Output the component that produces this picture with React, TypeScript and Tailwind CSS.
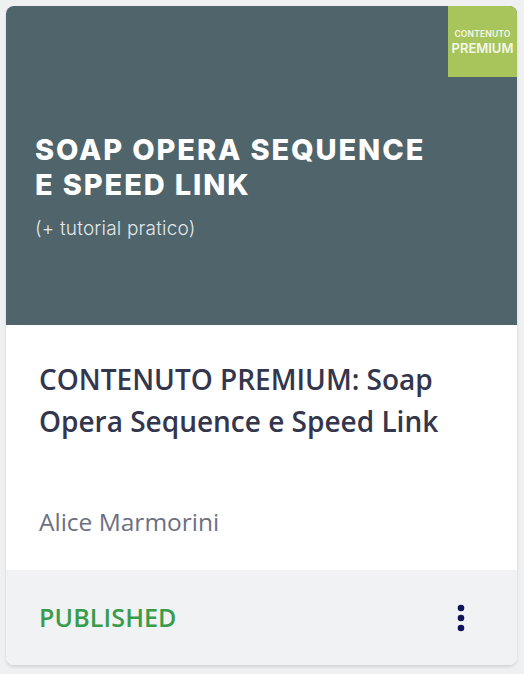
export default function App() {
  return (
    <div className="min-h-screen bg-[#eff0f2] p-[6px]">
      <div className="w-[511px] overflow-hidden rounded-lg bg-white shadow-[0_2px_3px_rgba(0,0,0,0.12)]">
        {/* Cover */}
        <div className="relative h-[319px] bg-[#4f646b] px-[29px] pt-[126px] font-['Inter',sans-serif] text-white">
          <div className="absolute right-0 top-0 flex h-[71px] w-[69px] flex-col items-center justify-center bg-[#a8c55b] pt-[2px] leading-none text-[#f4f8ea]">
            <span className="text-[8.5px] font-semibold tracking-[0.02em]">CONTENUTO</span>
            <span className="mt-[3px] text-[13px] font-semibold">PREMIUM</span>
          </div>
          <h1 className="text-[29px] font-extrabold leading-[35px] tracking-[0.065em]">
            SOAP OPERA SEQUENCE
            <br />
            E SPEED LINK
          </h1>
          <p className="mt-[13px] text-[19px] font-light tracking-[0.01em] text-[#e3e8ea]">(+ tutorial pratico)</p>
        </div>

        {/* Body */}
        <div className="flex h-[245px] flex-col px-[33px] pt-[33px] font-['Open_Sans',sans-serif]">
          <h2 className="text-[28px] font-semibold leading-[42px] text-[#33364c]">
            CONTENUTO PREMIUM: Soap Opera Sequence e Speed Link
          </h2>
          <div className="mt-auto pb-[29px] text-[24.5px] text-[#6c7082]">Alice Marmorini</div>
        </div>

        {/* Footer */}
        <div className="flex h-[95px] items-center justify-between bg-[#f1f2f4] pl-[33px] pr-[52px] font-['Open_Sans',sans-serif]">
          <span className="text-[25px] font-semibold tracking-[0.005em] text-[#399c4b]">PUBLISHED</span>
          <svg width="8" height="28" viewBox="0 0 8 28" className="text-[#15135c]">
            <circle cx="4" cy="4" r="3.3" fill="currentColor" />
            <circle cx="4" cy="14" r="3.3" fill="currentColor" />
            <circle cx="4" cy="24" r="3.3" fill="currentColor" />
          </svg>
        </div>
      </div>
    </div>
  );
}
